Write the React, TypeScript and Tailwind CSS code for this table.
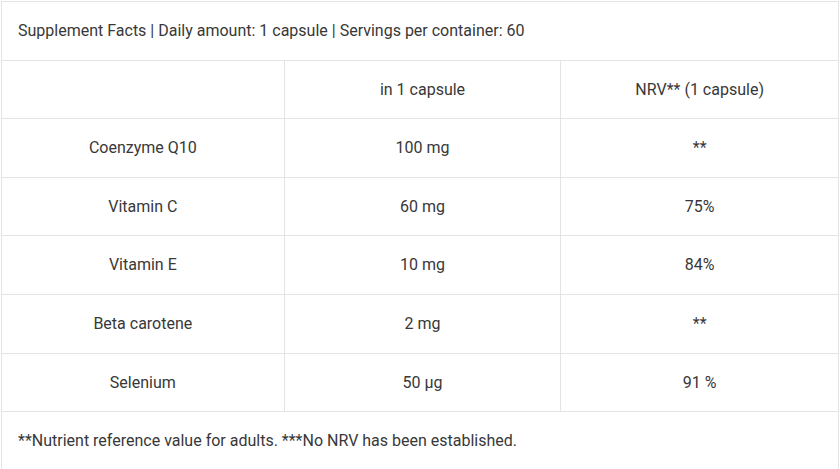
import React from "react";

const rows = [
  { name: "Coenzyme Q10", amount: "100 mg", nrv: "**" },
  { name: "Vitamin C", amount: "60 mg", nrv: "75%" },
  { name: "Vitamin E", amount: "10 mg", nrv: "84%" },
  { name: "Beta carotene", amount: "2 mg", nrv: "**" },
  { name: "Selenium", amount: "50 µg", nrv: "91 %" },
];

const cell = "border border-[#e4e4e4] px-4 py-4 text-center align-middle";

export default function App() {
  return (
    <div className="bg-white pl-px pt-px" style={{ fontFamily: "Roboto, 'Liberation Sans', sans-serif" }}>
      <table className="w-[838px] border-collapse text-[16px] leading-[1.6] text-[#383838]">
        <colgroup>
          <col className="w-[283px]" />
          <col className="w-[277px]" />
          <col className="w-[278px]" />
        </colgroup>
        <tbody>
          {/* Title row */}
          <tr>
            <td colSpan={3} className="border border-[#e4e4e4] px-4 py-4 text-left">
              Supplement Facts | Daily amount: 1 capsule | Servings per container: 60
            </td>
          </tr>
          <tr>
            <td className={cell}>&nbsp;</td>
            <td className={cell}>in 1 capsule</td>
            <td className={cell}>NRV** (1 capsule)</td>
          </tr>
          {rows.map((r) => (
            <tr key={r.name}>
              <td className={cell}>{r.name}</td>
              <td className={cell}>{r.amount}</td>
              <td className={cell}>{r.nrv}</td>
            </tr>
          ))}
          {/* Footnote */}
          <tr>
            <td colSpan={3} className="border border-[#e4e4e4] px-4 py-4 text-left">
              **Nutrient reference value for adults. ***No NRV has been established.
            </td>
          </tr>
        </tbody>
      </table>
    </div>
  );
}
